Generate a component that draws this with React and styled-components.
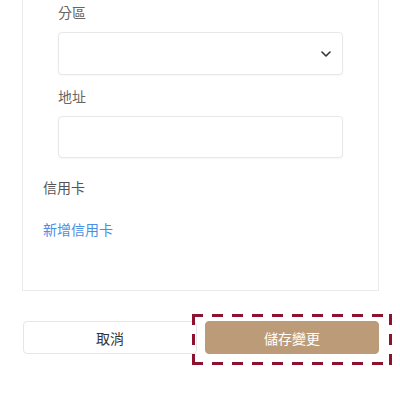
import React from "react";
import styled, { createGlobalStyle } from "styled-components";

const GlobalStyle = createGlobalStyle`
  html, body {
    margin: 0;
    padding: 0;
    background: #ffffff;
  }
  body {
    font-family: "Noto Sans CJK TC", "Noto Sans", "Liberation Sans", sans-serif;
    font-size: 14px;
    color: #333;
  }
`;

const Page = styled.div`
  min-height: 400px;
  box-sizing: border-box;
  padding: 0 21px 40px 22px;
`;

const Card = styled.section`
  margin-top: -1px;
  border: 1px solid #ebebeb;
  background: #fff;
  padding: 2px 20px 51px 20px;
`;

const Fields = styled.div`
  padding: 0 15px;
  display: flex;
  flex-direction: column;
`;

const Label = styled.label`
  display: block;
  line-height: 20px;
  color: #666;
  margin-bottom: 10px;
`;

const Field = styled.div`
  & + & {
    margin-top: 11px;
  }
`;

const Box = styled.div`
  height: ${(p) => p.$h}px;
  border: 1px solid #e8e8e8;
  border-radius: 4px;
  box-shadow: 0 1px 2px rgba(0, 0, 0, 0.04);
  box-sizing: border-box;
  background: #fff;
  display: flex;
  align-items: center;
  justify-content: flex-end;
  padding-right: 11px;
`;

const SubTitle = styled.div`
  margin-top: 19px;
  line-height: 20px;
  color: #555;
`;

const AddLink = styled.a`
  display: block;
  margin-top: 22px;
  line-height: 20px;
  color: #4a8fe6;
  text-decoration: none;
  cursor: pointer;
`;

const Actions = styled.div`
  display: grid;
  grid-template-columns: 1fr 1fr;
  gap: 8px;
  margin-top: 30px;
  padding-left: 1px;
`;

const Button = styled.button`
  display: block;
  width: 100%;
  height: 33px;
  border-radius: 4px;
  font-family: inherit;
  font-size: 14px;
  border: 1px solid ${(p) => (p.$primary ? "#bc9b79" : "#e6e6e6")};
  background: ${(p) => (p.$primary ? "#bc9b79" : "#fff")};
  color: ${(p) => (p.$primary ? "#fff" : "#333")};
  cursor: pointer;
`;

const Highlight = styled.div`
  position: relative;
`;

const dashX = "repeating-linear-gradient(90deg, #8c1230 0 11px, transparent 11px 20px)";
const dashY = "repeating-linear-gradient(180deg, #8c1230 0 11px, transparent 11px 20px)";

/* dashed focus frame drawn over the save button */
const DashFrame = styled.div`
  position: absolute;
  left: -13px;
  right: -13px;
  top: -7px;
  bottom: -11px;
  pointer-events: none;
  background:
    ${dashX} left top / 100% 3px no-repeat,
    ${dashX} left bottom / 100% 3px no-repeat,
    ${dashY} left top / 3px 100% no-repeat,
    ${dashY} right top / 3px 100% no-repeat;
`;

const Chevron = () => (
  <svg width="10" height="6" viewBox="0 0 10 6" fill="none">
    <path d="M1 1l4 4 4-4" stroke="#333" strokeWidth="1.6" strokeLinecap="round" strokeLinejoin="round" />
  </svg>
);

export default function App() {
  return (
    <>
      <GlobalStyle />
      <Page>
        <Card>
          <Fields>
            <Field>
              <Label>分區</Label>
              <Box $h={43}>
                <Chevron />
              </Box>
            </Field>
            <Field>
              <Label>地址</Label>
              <Box $h={42} />
            </Field>
          </Fields>
          <SubTitle>信用卡</SubTitle>
          <AddLink>新增信用卡</AddLink>
        </Card>
        <Actions>
          <Button>取消</Button>
          <Highlight>
            <Button $primary>儲存變更</Button>
            <DashFrame />
          </Highlight>
        </Actions>
      </Page>
    </>
  );
}
